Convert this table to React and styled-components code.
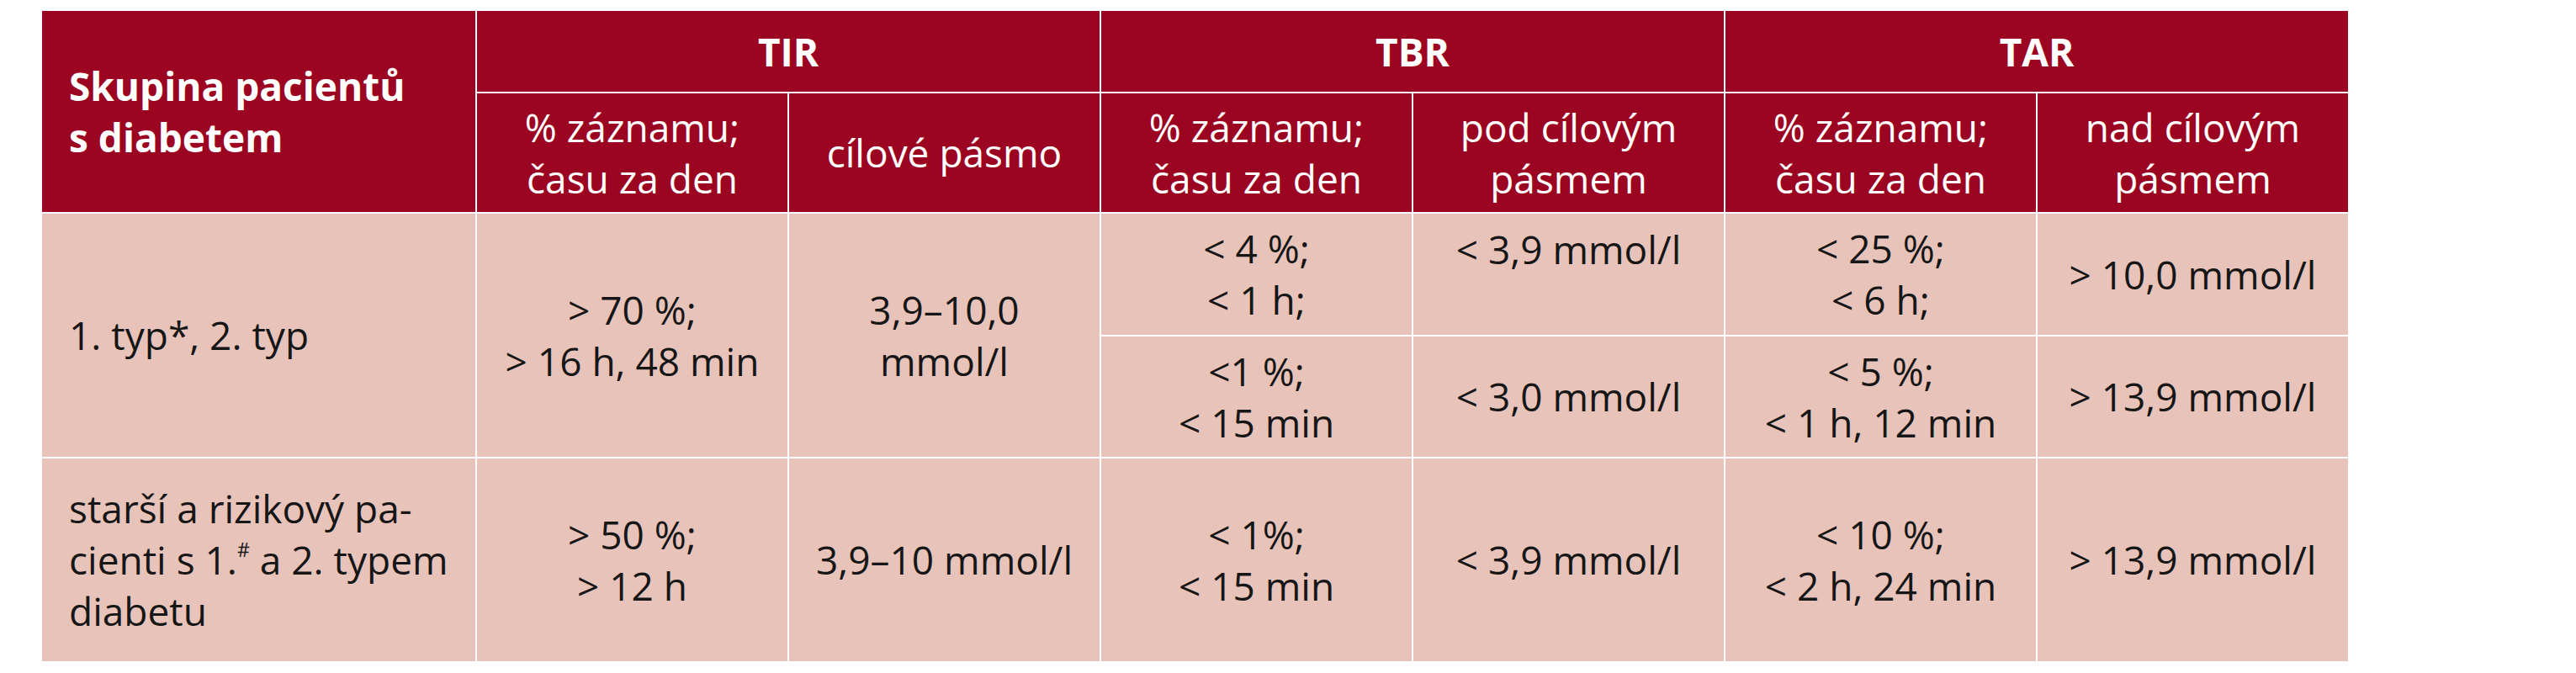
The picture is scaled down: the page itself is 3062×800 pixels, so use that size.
import React from "react";
import styled, { createGlobalStyle } from "styled-components";

const Global = createGlobalStyle`
  html, body { margin: 0; padding: 0; background: #ffffff; }
  body { font-family: "Open Sans", "Noto Sans", "Liberation Sans", sans-serif; }
`;

const Page = styled.div`
  padding: 13px 0 0 50px;
  width: 3062px;
  height: 800px;
  box-sizing: border-box;
`;

const Grid = styled.div`
  display: grid;
  grid-template-columns: 515px repeat(6, 369px);
  grid-template-rows: 96px 141px 144px 143px 241px;
  gap: 2px;
  width: 2741px;
  background: #ffffff;
`;

const Cell = styled.div`
  grid-column: ${(p) => p.$col || "auto"};
  grid-row: ${(p) => p.$row || "auto"};
  display: flex;
  flex-direction: column;
  justify-content: ${(p) => (p.$top ? "flex-start" : "center")};
  align-items: ${(p) => (p.$left ? "flex-start" : "center")};
  text-align: ${(p) => (p.$left ? "left" : "center")};
  padding: ${(p) => (p.$left ? "0 0 0 32px" : p.$top ? "12px 0 0 0" : "0")};
  box-sizing: border-box;
  font-size: 46px;
  line-height: 61px;
  white-space: nowrap;
`;

const HeadCell = styled(Cell)`
  background: #9c0522;
  color: #ffffff;
  font-weight: ${(p) => (p.$bold ? 700 : 400)};
`;

const DataCell = styled(Cell)`
  background: #e7c3ba;
  color: #161616;
`;

const Sup = styled.sup`
  font-size: 0.5em;
  line-height: 0;
  vertical-align: 0.9em;
`;

const Lines = ({ children }) => {
  const arr = Array.isArray(children) ? children : [children];
  return arr.map((l, i) => <span key={i}>{l}</span>);
};

export default function App() {
  return (
    <>
      <Global />
      <Page>
        <Grid>
          <HeadCell $col="1" $row="1 / span 2" $left $bold>
            <Lines>{["Skupina pacientů", "s diabetem"]}</Lines>
          </HeadCell>
          <HeadCell $col="2 / span 2" $row="1" $bold>TIR</HeadCell>
          <HeadCell $col="4 / span 2" $row="1" $bold>TBR</HeadCell>
          <HeadCell $col="6 / span 2" $row="1" $bold>TAR</HeadCell>

          <HeadCell $col="2" $row="2"><Lines>{["% záznamu;", "času za den"]}</Lines></HeadCell>
          <HeadCell $col="3" $row="2">cílové pásmo</HeadCell>
          <HeadCell $col="4" $row="2"><Lines>{["% záznamu;", "času za den"]}</Lines></HeadCell>
          <HeadCell $col="5" $row="2"><Lines>{["pod cílovým", "pásmem"]}</Lines></HeadCell>
          <HeadCell $col="6" $row="2"><Lines>{["% záznamu;", "času za den"]}</Lines></HeadCell>
          <HeadCell $col="7" $row="2"><Lines>{["nad cílovým", "pásmem"]}</Lines></HeadCell>

          <DataCell $col="1" $row="3 / span 2" $left>1. typ*, 2. typ</DataCell>
          <DataCell $col="2" $row="3 / span 2"><Lines>{["> 70 %;", "> 16 h, 48 min"]}</Lines></DataCell>
          <DataCell $col="3" $row="3 / span 2"><Lines>{["3,9–10,0", "mmol/l"]}</Lines></DataCell>
          <DataCell $col="4" $row="3"><Lines>{["< 4 %;", "< 1 h;"]}</Lines></DataCell>
          <DataCell $col="5" $row="3" $top>&lt; 3,9 mmol/l</DataCell>
          <DataCell $col="6" $row="3"><Lines>{["< 25 %;", "< 6 h;"]}</Lines></DataCell>
          <DataCell $col="7" $row="3">&gt; 10,0 mmol/l</DataCell>

          <DataCell $col="4" $row="4"><Lines>{["<1 %;", "< 15 min"]}</Lines></DataCell>
          <DataCell $col="5" $row="4">&lt; 3,0 mmol/l</DataCell>
          <DataCell $col="6" $row="4"><Lines>{["< 5 %;", "< 1 h, 12 min"]}</Lines></DataCell>
          <DataCell $col="7" $row="4">&gt; 13,9 mmol/l</DataCell>

          <DataCell $col="1" $row="5" $left>
            <span>starší a rizikový pa-</span>
            <span>cienti s 1.<Sup>#</Sup> a 2. typem</span>
            <span>diabetu</span>
          </DataCell>
          <DataCell $col="2" $row="5"><Lines>{["> 50 %;", "> 12 h"]}</Lines></DataCell>
          <DataCell $col="3" $row="5">3,9–10 mmol/l</DataCell>
          <DataCell $col="4" $row="5"><Lines>{["< 1%;", "< 15 min"]}</Lines></DataCell>
          <DataCell $col="5" $row="5">&lt; 3,9 mmol/l</DataCell>
          <DataCell $col="6" $row="5"><Lines>{["< 10 %;", "< 2 h, 24 min"]}</Lines></DataCell>
          <DataCell $col="7" $row="5">&gt; 13,9 mmol/l</DataCell>
        </Grid>
      </Page>
    </>
  );
}
